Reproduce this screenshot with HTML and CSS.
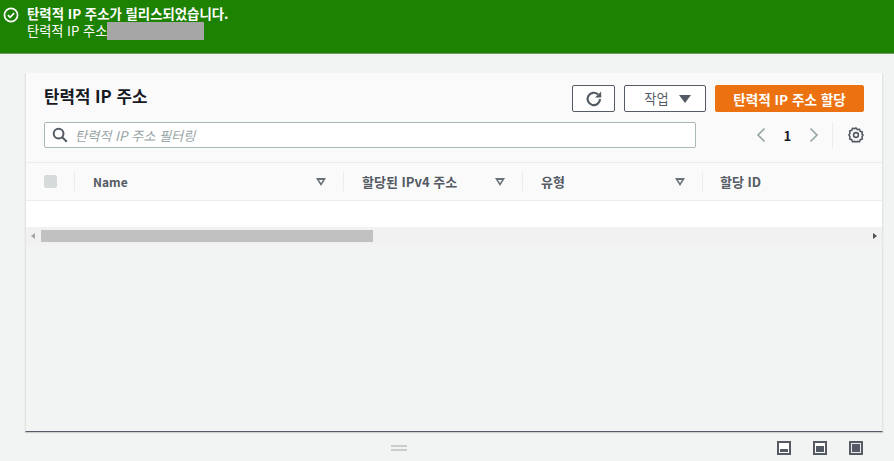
FILE: index.html
```html
<!DOCTYPE html>
<html lang="ko">
<head>
    <meta charset="UTF-8">
    <meta name="viewport" content="width=device-width, initial-scale=1.0">
    <title>탄력적 IP 주소</title>
    <link rel="stylesheet" href="styles.css">
</head>
<body>
    <!-- Success banner -->
    <div class="flash">
        <svg class="flash-icon" width="16" height="16" viewBox="0 0 16 16">
            <circle cx="8" cy="8" r="6.6" fill="none" stroke="#fff" stroke-width="1.7"/>
            <path d="M4.9 8.1l2.2 2.2 4-4.2" fill="none" stroke="#fff" stroke-width="1.7"/>
        </svg>
        <div class="flash-text">
            <div class="flash-title">탄력적 IP 주소가 릴리스되었습니다.</div>
            <div class="flash-line">탄력적 IP 주소<span class="redacted"></span></div>
        </div>
    </div>

    <div class="card">
        <div class="card-header">
            <div class="title-row">
                <h1>탄력적 IP 주소</h1>
                <div class="actions">
                    <button class="btn btn-icon">
                        <svg width="18" height="18" viewBox="0 0 18 18">
                            <path d="M15 9a6.2 6.2 0 1 1-2-4.6" fill="none" stroke="#545b64" stroke-width="2.2"/>
                            <path d="M10 7.6h6.2V1.4z" fill="#545b64"/>
                        </svg>
                    </button>
                    <button class="btn btn-menu">작업<span class="caret"></span></button>
                    <button class="btn btn-primary">탄력적 IP 주소 할당</button>
                </div>
            </div>
            <div class="filter-row">
                <div class="filter">
                    <svg width="16" height="16" viewBox="0 0 16 16">
                        <circle cx="6.6" cy="6.6" r="4.9" fill="none" stroke="#545b64" stroke-width="2"/>
                        <path d="M10.2 10.2l4.6 4.6" stroke="#545b64" stroke-width="2"/>
                    </svg>
                    <span class="placeholder">탄력적 IP 주소 필터링</span>
                </div>
                <div class="pager">
                    <svg width="12" height="16" viewBox="0 0 12 16"><path d="M9.5 1.5L3 8l6.5 6.5" fill="none" stroke="#95a5a6" stroke-width="1.6"/></svg>
                    <span class="page-num">1</span>
                    <svg width="12" height="16" viewBox="0 0 12 16"><path d="M2.5 1.5L9 8l-6.5 6.5" fill="none" stroke="#95a5a6" stroke-width="1.6"/></svg>
                </div>
                <div class="settings">
                    <svg width="16" height="16" viewBox="0 0 16 16">
                        <path d="M8 1l1.4 1.6 2.1-.3.8 2 2 .8-.3 2.1L15 8l-1 1.8.3 2.1-2 .8-.8 2-2.1-.3L8 15l-1.4-.6-2.1.3-.8-2-2-.8.3-2.1L1 8l1-1.8-.3-2.1 2-.8.8-2 2.1.3z" fill="none" stroke="#545b64" stroke-width="1.6"/>
                        <circle cx="8" cy="8" r="2.4" fill="none" stroke="#545b64" stroke-width="1.6"/>
                    </svg>
                </div>
            </div>
        </div>

        <div class="table-head">
            <div class="col col-check"><span class="checkbox"></span></div>
            <div class="col col-name"><span class="col-label latin">Name</span><span class="sort"></span></div>
            <div class="col col-ip"><span class="col-label">할당된 IPv4 주소</span><span class="sort"></span></div>
            <div class="col col-type"><span class="col-label">유형</span><span class="sort"></span></div>
            <div class="col col-id"><span class="col-label">할당 ID</span></div>
        </div>
        <div class="table-body"></div>

        <div class="scrollbar">
            <span class="arrow arrow-left"></span>
            <div class="track"><div class="thumb"></div></div>
            <span class="arrow arrow-right"></span>
        </div>
        <div class="card-rest"></div>
    </div>

    <div class="footer">
        <div class="handle"></div>
        <div class="split-icons">
            <svg width="14" height="14" viewBox="0 0 14 14"><rect x="1" y="1" width="12" height="12" fill="#fff" stroke="#545b64" stroke-width="2"/><rect x="3" y="8" width="8" height="3" fill="#545b64"/></svg>
            <svg width="14" height="14" viewBox="0 0 14 14"><rect x="1" y="1" width="12" height="12" fill="#fff" stroke="#545b64" stroke-width="2"/><rect x="3" y="5" width="8" height="6" fill="#545b64"/></svg>
            <svg width="14" height="14" viewBox="0 0 14 14"><rect x="1" y="1" width="12" height="12" fill="#e9ebeb" stroke="#545b64" stroke-width="2"/><rect x="3" y="3" width="8" height="8" fill="#545b64"/></svg>
        </div>
    </div>
</body>
</html>
```

FILE: styles.css
```css
html, body {
    height: 100%;
}
body {
    margin: 0;
    height: 461px;
    overflow: hidden;
    background-color: #f2f3f3;
    color: #16191f;
    font-family: "Noto Sans CJK KR", "Noto Sans", sans-serif;
    font-size: 13.2px;
    display: flex;
    flex-direction: column;
}

/* banner */
.flash {
    height: 54px;
    box-sizing: border-box;
    background-color: #1d8102;
    border-bottom: 1px solid #6f9a63;
    color: #fff;
    display: flex;
    padding: 4px 0 0 3px;
}
.flash-icon {
    margin-top: 3px;
}
.flash-text {
    margin-left: 8px;
    line-height: 18px;
}
.flash-title {
    font-weight: 700;
    font-size: 13.4px;
}
.redacted {
    display: inline-block;
    width: 97px;
    height: 18px;
    background-color: #a6a6a6;
    vertical-align: top;
}

/* card */
.card {
    margin: 19px 11px 0 25px;
    height: 359px;
    box-sizing: border-box;
    background-color: #f2f3f3;
    border-left: 1px solid #e3e5e5;
    border-right: 1px solid #e3e5e5;
    border-bottom: 1px solid #545b64;
    box-shadow: 0 1px 1px rgba(0, 0, 0, 0.15);
    display: flex;
    flex-direction: column;
}
.card-header {
    height: 90px;
    box-sizing: border-box;
    background-color: #fafafa;
    border-bottom: 1px solid #eaeded;
    padding: 12px 18px 0 18px;
}
.title-row {
    display: flex;
    justify-content: space-between;
    align-items: center;
    height: 27px;
}
h1 {
    margin: 0 0 6px;
    font-size: 16.8px;
    font-weight: 700;
    line-height: 24px;
}
.actions {
    display: flex;
    gap: 9px;
}
.btn {
    height: 27px;
    box-sizing: border-box;
    border-radius: 2px;
    font-family: inherit;
    font-size: 13.2px;
    padding: 0;
    background-color: #fff;
    border: 1px solid #545b64;
    color: #545b64;
    display: flex;
    align-items: center;
    justify-content: center;
}
.btn-icon {
    width: 43px;
}
.btn-menu {
    width: 82px;
    gap: 10px;
    padding-left: 5px;
}
.caret {
    border-left: 6px solid transparent;
    border-right: 6px solid transparent;
    border-top: 8px solid #545b64;
}
.btn-primary {
    width: 149px;
    background-color: #ec7211;
    border-color: #ec7211;
    color: #fff;
    font-weight: 700;
    font-size: 13.6px;
}
.filter-row {
    display: flex;
    align-items: center;
    margin-top: 10px;
}
.filter {
    width: 652px;
    height: 26px;
    box-sizing: border-box;
    background-color: #fff;
    border: 1px solid #aab7b8;
    border-radius: 2px;
    display: flex;
    align-items: center;
    padding-left: 7px;
    gap: 7px;
}
.placeholder {
    color: #98a4a5;
    font-style: italic;
}
.pager {
    margin-left: 59px;
    width: 65px;
    display: flex;
    align-items: center;
    justify-content: space-between;
}
.page-num {
    font-weight: 700;
}
.settings {
    margin-left: 12px;
    border-left: 1px solid #eaeded;
    height: 26px;
    padding-left: 15px;
    display: flex;
    align-items: center;
}

/* table */
.table-head {
    height: 38px;
    box-sizing: border-box;
    background-color: #fafafa;
    border-bottom: 1px solid #eaeded;
    display: flex;
    align-items: center;
    color: #545b64;
    font-size: 13px;
    font-weight: 700;
}
.col {
    height: 19px;
    box-sizing: border-box;
    display: flex;
    align-items: center;
    justify-content: space-between;
    padding: 0 17px 0 18px;
    border-left: 1px solid #eaeded;
}
.col-check {
    width: 48px;
    border-left: none;
    padding-left: 18px;
}
.col-name {
    width: 269px;
}
.col-ip {
    width: 179px;
}
.col-type {
    width: 180px;
}
.col-id {
    flex: 1;
    padding-left: 17px;
}
.latin {
    font-size: 12px;
}
.checkbox {
    width: 13px;
    height: 13px;
    background-color: #d5dbdb;
    border-radius: 2px;
}
.sort {
    position: relative;
    width: 0;
    height: 0;
    border-left: 5px solid transparent;
    border-right: 5px solid transparent;
    border-top: 8px solid #687078;
}
.sort::after {
    content: "";
    position: absolute;
    left: -2px;
    top: -6px;
    border-left: 2px solid transparent;
    border-right: 2px solid transparent;
    border-top: 3px solid #fafafa;
}
.table-body {
    height: 26px;
    background-color: #fff;
}
.scrollbar {
    height: 18px;
    background-color: #f1f1f1;
    display: flex;
    align-items: center;
}
.arrow {
    width: 0;
    height: 0;
    border-top: 3px solid transparent;
    border-bottom: 3px solid transparent;
}
.arrow-left {
    margin-left: 5px;
    border-right: 4px solid #a3a3a3;
}
.arrow-right {
    margin-right: 5px;
    border-left: 4px solid #505050;
}
.track {
    flex: 1;
    padding: 0 3px 0 6px;
}
.thumb {
    width: 332px;
    height: 12px;
    background-color: #c1c1c1;
}
.card-rest {
    flex: 1;
}

/* bottom split panel bar */
.footer {
    flex: 1;
    display: flex;
    align-items: center;
    padding-top: 3px;
}
.handle {
    margin-left: 391px;
    width: 16px;
    height: 2px;
    border-top: 2px solid #c8cccc;
    border-bottom: 2px solid #c8cccc;
}
.split-icons {
    margin-left: auto;
    margin-right: 31px;
    display: flex;
    gap: 22px;
}
```
